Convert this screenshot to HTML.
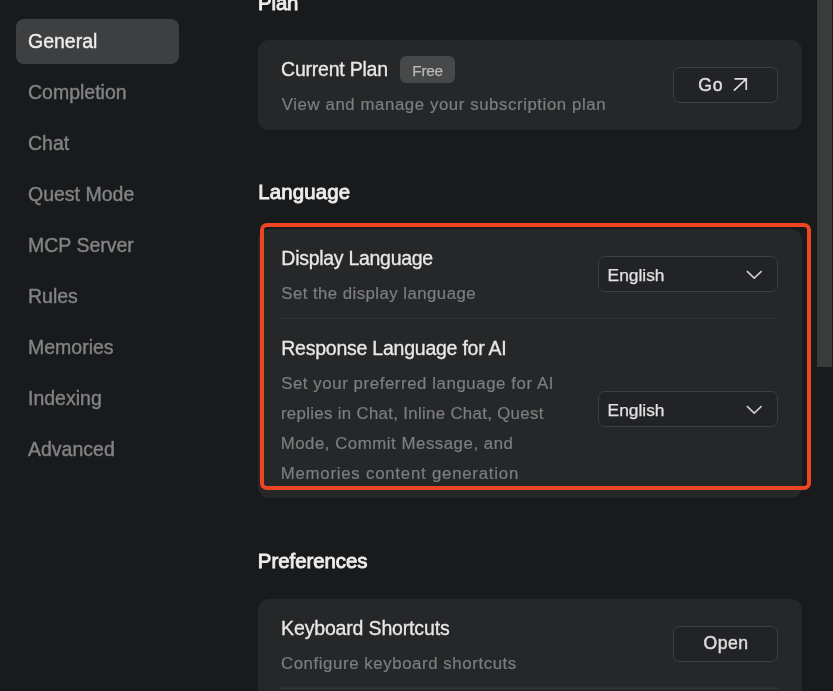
<!DOCTYPE html>
<html lang="en">
<head>
<meta charset="utf-8">
<title>Settings</title>
<style>
  html, body { margin: 0; padding: 0; }
  body {
    width: 833px; height: 691px; overflow: hidden; position: relative;
    background: #191a1c;
    font-family: "Liberation Sans", sans-serif;
    color: #e6e6e6;
  }
  #root { position: absolute; left: 0; top: 0; width: 833px; height: 691px; overflow: hidden; will-change: transform; }
  .abs { position: absolute; white-space: nowrap; }
  /* sidebar */
  .nav-active { left: 16px; top: 19px; width: 163px; height: 45px; border-radius: 8px; background: #3e3f41; }
  .nav { left: 28px; font-size: 19.5px; line-height: 24px; color: #828384; -webkit-text-stroke: 0.4px #828384; }
  .nav.on { color: #ececec; -webkit-text-stroke: 0.4px #ececec; }
  /* content */
  .h { font-size: 20.4px; font-weight: normal; line-height: 24px; color: #ececec; -webkit-text-stroke: 0.9px #ececec; }
  .card { left: 257.5px; width: 544.5px; background: #262729; border-radius: 11px; }
  .t { font-size: 19.5px; line-height: 24px; color: #e8e8e8; -webkit-text-stroke: 0.3px #e8e8e8; }
  .d { font-size: 16.8px; line-height: 24px; color: #7c7e7f; -webkit-text-stroke: 0.2px #7c7e7f; }
  .bd { font-size: 15.4px; line-height: 24px; color: #b8b8b8; -webkit-text-stroke: 0.25px #b8b8b8; }
  .hr { left: 280px; width: 498px; height: 1px; background: #313235; }
  .btn { left: 673px; width: 103px; height: 34px; border: 1px solid #3a4146; border-radius: 7px; background: #222326; }
  .btxt { font-size: 17.6px; line-height: 24px; color: #dcdcdc; -webkit-text-stroke: 0.5px #dcdcdc; }
  .btxt2 { font-size: 17.4px; line-height: 24px; color: #e2e2e2; -webkit-text-stroke: 0.25px #e2e2e2; }
  .sel { left: 598px; width: 178px; height: 34px; border: 1px solid #3a4146; border-radius: 7px; background: #222326; }
  .badge { left: 400px; top: 56px; width: 55px; height: 27px; border-radius: 6px; background: #474849; }
  .redbox { left: 260px; top: 223px; width: 543px; height: 259px; border: 4px solid #ee4423; border-radius: 7px; }
  .thumb { left: 817px; top: 0; width: 15px; height: 367px; background: #3a3c3b; }
</style>
</head>
<body>
<div id="root">
  <!-- sidebar -->
  <div class="abs nav-active"></div>
  <div class="abs nav on" style="top:29px">General</div>
  <div class="abs nav" style="top:80px">Completion</div>
  <div class="abs nav" style="top:131px">Chat</div>
  <div class="abs nav" style="top:182px">Quest Mode</div>
  <div class="abs nav" style="top:233px">MCP Server</div>
  <div class="abs nav" style="top:284px">Rules</div>
  <div class="abs nav" style="top:335px">Memories</div>
  <div class="abs nav" style="top:386px">Indexing</div>
  <div class="abs nav" style="top:437px">Advanced</div>

  <!-- Plan -->
  <div id="plan" class="abs h" style="left:258.1px;top:-9px;letter-spacing:-0.150px">Plan</div>
  <div class="abs card" style="top:40px;height:90px"></div>
  <div id="curplan" class="abs t" style="left:281.05px;top:57px;letter-spacing:-0.231px">Current Plan</div>
  <div class="abs badge"></div>
  <div id="free" class="abs bd" style="left:412.35px;top:59px;letter-spacing:-0.299px">Free</div>
  <div id="desc1" class="abs d" style="left:281.8px;top:93px;letter-spacing:0.589px">View and manage your subscription plan</div>
  <div class="abs btn" style="top:67px"></div>
  <div id="go" class="abs btxt" style="left:698.3px;top:73px;letter-spacing:0.750px">Go</div>
  <svg class="abs" style="left:731px;top:76px" width="19" height="17" viewBox="0 0 19 17"><path d="M3.5 2.9 H15.25 V14 M15.25 2.9 L2.9 14.6" fill="none" stroke="#dcdcdc" stroke-width="1.7"/></svg>

  <!-- Language -->
  <div id="language" class="abs h" style="left:258.15px;top:180px;letter-spacing:0.161px">Language</div>
  <div class="abs card" style="top:229px;height:269px"></div>
  <div id="displang" class="abs t" style="left:281.35px;top:246px;letter-spacing:-0.287px">Display Language</div>
  <div id="desc2" class="abs d" style="left:281.25px;top:282px;letter-spacing:0.457px">Set the display language</div>
  <div class="abs sel" style="top:256px"></div>
  <div id="eng1" class="abs btxt2" style="left:607.55px;top:263px;letter-spacing:-0.017px">English</div>
  <svg class="abs" style="left:744px;top:268px" width="20" height="13" viewBox="0 0 20 13"><path d="M2.9 3.2 L10.25 10.2 L17.6 3.2" fill="none" stroke="#cfcfcf" stroke-width="1.6"/></svg>
  <div class="abs hr" style="top:318px"></div>
  <div id="resp" class="abs t" style="left:281.25px;top:336px;letter-spacing:-0.236px">Response Language for AI</div>
  <div id="d3a" class="abs d" style="left:281.15px;top:372px;letter-spacing:0.590px">Set your preferred language for AI</div>
  <div id="d3b" class="abs d" style="left:280.9px;top:402px;letter-spacing:0.339px">replies in Chat, Inline Chat, Quest</div>
  <div id="d3c" class="abs d" style="left:280.65px;top:432px;letter-spacing:0.544px">Mode, Commit Message, and</div>
  <div id="d3d" class="abs d" style="left:280.65px;top:462px;letter-spacing:0.779px">Memories content generation</div>
  <div class="abs sel" style="top:391px"></div>
  <div id="eng2" class="abs btxt2" style="left:607.55px;top:398px;letter-spacing:-0.017px">English</div>
  <svg class="abs" style="left:744px;top:403px" width="20" height="13" viewBox="0 0 20 13"><path d="M2.9 3.2 L10.25 10.2 L17.6 3.2" fill="none" stroke="#cfcfcf" stroke-width="1.6"/></svg>
  <div class="abs redbox"></div>

  <!-- Preferences -->
  <div id="prefs" class="abs h" style="left:257.85px;top:549px;letter-spacing:-0.025px">Preferences</div>
  <div class="abs card" style="top:599px;height:120px;border-bottom-left-radius:0;border-bottom-right-radius:0"></div>
  <div id="keyb" class="abs t" style="left:281.1px;top:616px;letter-spacing:-0.159px">Keyboard Shortcuts</div>
  <div id="desc4" class="abs d" style="left:280.95px;top:652px;letter-spacing:0.595px">Configure keyboard shortcuts</div>
  <div class="abs btn" style="top:626px"></div>
  <div id="open" class="abs btxt" style="left:703.5px;top:631px;letter-spacing:0.527px">Open</div>
  <div class="abs hr" style="top:687px;height:2px;background:linear-gradient(#2d2e31 50%,#353639 50%)"></div>

  <!-- scrollbar -->
  <div class="abs thumb"></div>
</div>
</body>
</html>
